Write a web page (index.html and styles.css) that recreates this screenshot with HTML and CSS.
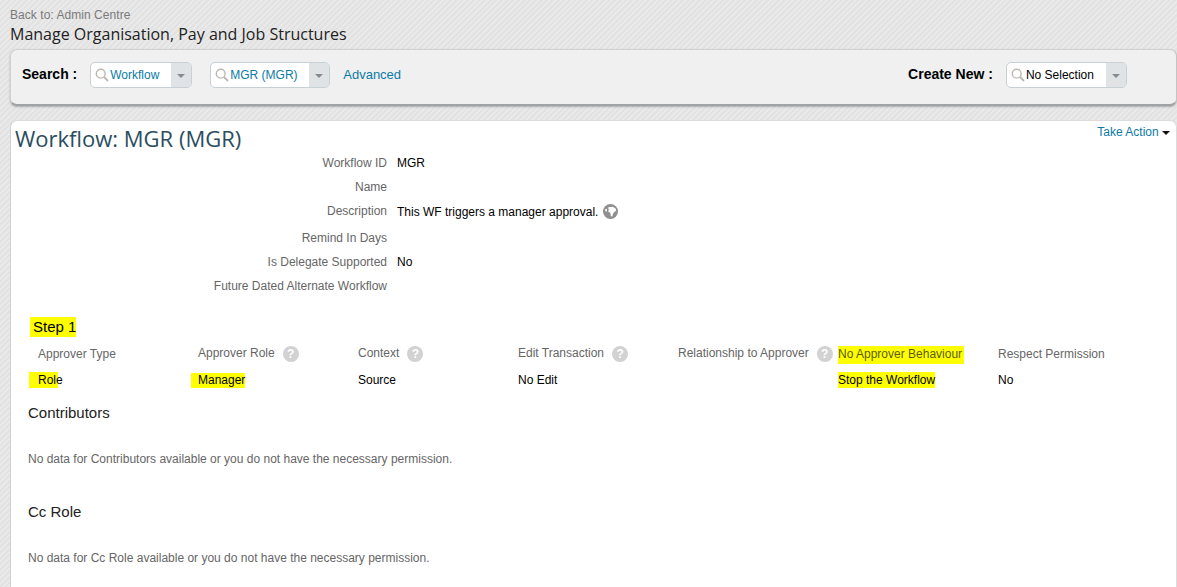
FILE: index.html
```html
<!DOCTYPE html>
<html lang="en">
<head>
<meta charset="utf-8">
<title>Workflow: MGR (MGR)</title>
<link rel="stylesheet" href="styles.css">
</head>
<body>
<svg class="defs" width="0" height="0" aria-hidden="true">
  <symbol id="mag" viewBox="0 0 14 14"><circle cx="5.7" cy="5.7" r="4.4" fill="none" stroke="#bdb8b0" stroke-width="1.4"/><path d="M9 9l4 4" stroke="#bdb8b0" stroke-width="1.8" fill="none"/></symbol>
</svg>
<header class="top">
  <a class="back">Back to: Admin Centre</a>
  <h1 class="page-title">Manage Organisation, Pay and Job Structures</h1>
</header>
<section class="search-panel">
  <span class="panel-label">Search :</span>
  <div class="combo combo-wf"><svg class="mag"><use href="#mag"/></svg><span class="combo-text link">Workflow</span><span class="combo-btn"><i class="arrow"></i></span></div>
  <div class="combo combo-mgr"><svg class="mag"><use href="#mag"/></svg><span class="combo-text link">MGR (MGR)</span><span class="combo-btn"><i class="arrow"></i></span></div>
  <a class="advanced link">Advanced</a>
  <span class="panel-label create-label">Create New :</span>
  <div class="combo combo-new"><svg class="mag"><use href="#mag"/></svg><span class="combo-text">No Selection</span><span class="combo-btn"><i class="arrow"></i></span></div>
</section>
<main class="card">
  <div class="card-head">
    <h2 class="wf-title">Workflow: MGR (MGR)</h2>
    <a class="take-action link">Take Action <i class="arrow-dark"></i></a>
  </div>
  <dl class="fields">
    <dt class="r1">Workflow ID</dt><dd class="r1">MGR</dd>
    <dt class="r2">Name</dt><dd class="r2"></dd>
    <dt class="r3">Description</dt><dd class="r3 desc">This WF triggers a manager approval. <svg class="globe" viewBox="0 0 16 16"><circle cx="8" cy="8" r="8" fill="#8f8f8f"/><path d="M5.6 3.4l5-.6 3 2.2.4 2.2-2.8 2-1.3 3.8-1.4.2-.8-4-2.2-1.2.6-1.6z" fill="#fff"/><path d="M2 5.5l2-.5.4 2.6-1.4.6z" fill="#fff"/></svg></dd>
    <dt class="r4">Remind In Days</dt><dd class="r4"></dd>
    <dt class="r5">Is Delegate Supported</dt><dd class="r5">No</dd>
    <dt class="r6">Future Dated Alternate Workflow</dt><dd class="r6"></dd>
  </dl>
  <h3 class="step"><span class="hl hl-step">Step 1</span></h3>
  <div class="step-grid">
    <div class="th th-a">Approver Type</div>
    <div class="th">Approver Role<span class="help">?</span></div>
    <div class="th">Context<span class="help">?</span></div>
    <div class="th">Edit Transaction<span class="help">?</span></div>
    <div class="th">Relationship to Approver<span class="help">?</span></div>
    <div class="th th-a"><span class="hl hl-behav">No Approver Behaviour</span></div>
    <div class="th th-a">Respect Permission</div>
    <div class="td"><span class="hl hl-role">Role</span></div>
    <div class="td"><span class="hl hl-mgr">Manager</span></div>
    <div class="td">Source</div>
    <div class="td">No Edit</div>
    <div class="td"></div>
    <div class="td"><span class="hl hl-stop">Stop the Workflow</span></div>
    <div class="td">No</div>
  </div>
  <h3 class="sub sub-contrib">Contributors</h3>
  <p class="empty">No data for Contributors available or you do not have the necessary permission.</p>
  <h3 class="sub sub-cc">Cc Role</h3>
  <p class="empty">No data for Cc Role available or you do not have the necessary permission.</p>
</main>
</body>
</html>
```
FILE: styles.css
```css
* { box-sizing: border-box; }
html, body { height: 100%; }
body {
  margin: 0;
  height: 587px;
  overflow: hidden;
  font-family: "Liberation Sans", Arial, sans-serif;
  font-size: 12px;
  color: #000;
  background: repeating-linear-gradient(135deg, #e9e9e9 0 2px, #e2e2e2 2px 4px);
}
.defs { position: absolute; }
.link { color: #0c7aa6; }
.top { padding: 8px 0 0 10px; height: 49px; }
.back { display: block; color: #7a7a7a; line-height: 14px; letter-spacing: .05px; }
.page-title {
  margin: 1px 0 0;
  font: 400 16px/22px "Open Sans", sans-serif;
  color: #222;
}
.search-panel {
  margin-left: 10px;
  height: 57px;
  display: flex;
  align-items: flex-start;
  padding-top: 12px;
  background: #f0f0f0;
  border: 1px solid #d0d0d0;
  border-bottom: 2px solid #9fa3a5;
  border-right: 1px solid #c4c4c4;
  border-radius: 7px;
  box-shadow: 0 1px 2px rgba(0,0,0,.25);
}
.panel-label { font-weight: 700; font-size: 14px; line-height: 22px; margin: 1px 0 0 11px; }
.combo {
  height: 26px;
  display: flex;
  align-items: center;
  background: #fff;
  border: 1px solid #c7d0d4;
  border-radius: 5px;
  overflow: hidden;
}
.combo-wf { width: 102px; margin-left: 13px; }
.combo-mgr { width: 120px; margin-left: 18px; }
.combo-new { width: 121px; margin-left: 13px; }
.create-label { margin-left: 507px; }
.mag { width: 14px; height: 14px; margin-left: 4px; flex: none; }
.combo-text { margin-left: 1px; flex: 1; white-space: nowrap; }
.combo-btn {
  width: 20px; height: 100%;
  background: #dfe3e5;
  display: flex; align-items: center; justify-content: center;
  flex: none;
}
.arrow { width: 0; height: 0; border: 4px solid transparent; border-top: 4px solid #858b8f; border-bottom: 0; margin-top: 2px; }
.advanced { margin: 2px 0 0 13px; font-size: 13px; line-height: 22px; }
.card {
  margin: 14px 0 0 10px;
  height: 481px;
  background: #fff;
  border: 1px solid #dcdcdc;
  border-left-color: #cfcfcf;
  border-radius: 7px 7px 0 0;
}
.card-head { display: flex; justify-content: space-between; align-items: flex-start; }
.wf-title {
  margin: 3px 0 0 4px;
  font: 400 22px/28px "Open Sans", sans-serif;
  color: #2b4d60;
}
.take-action { margin: 4px 6px 0 0; line-height: 14px; }
.arrow-dark { display: inline-block; width: 0; height: 0; border: 4px solid transparent; border-top: 4px solid #111; border-bottom: 0; vertical-align: 1px; }
.fields {
  margin: 3px 0 0;
  display: grid;
  grid-template-columns: 376px 1fr;
  column-gap: 10px;
}
.fields dt { color: #666; text-align: right; line-height: 14px; }
.fields dd { margin: 0; line-height: 14px; }
.r1 { margin-top: 1px !important; height: 24px; }
.r2 { height: 24px; }
.r3 { height: 27px; }
.r4 { height: 24px; }
.r5 { height: 24px; }
.r6 { height: 14px; }
.desc { display: flex; align-items: flex-start; white-space: pre; line-height: 16px !important; }
.globe { width: 15px; height: 15px; margin-left: 1px; }
.step { margin: 25px 0 0 19px; font-weight: 400; font-size: 15px; line-height: 17px; height: 17px; }
.hl { background: #ffff00; }
.hl-step { padding: 1px 0 2px 3px; }
.step-grid {
  margin: 11px 0 0 27px;
  display: grid;
  grid-template-columns: repeat(7, 160px);
  grid-template-rows: 27px 20px;
}
.th { color: #666; line-height: 15px; white-space: nowrap; display: flex; align-items: flex-start; }
.th-a { padding-top: 1px; }
.help {
  width: 16px; height: 16px;
  margin-left: 8px;
  flex: none;
  border-radius: 50%;
  background: #d2d2d2;
  color: #fff;
  font-weight: 700;
  font-size: 12px;
  line-height: 16px;
  text-align: center;
}
.td { line-height: 14px; }
.hl-behav { padding: 1px 2px 2px 0; margin-top: -1px; color: #5c5c00; }
.hl-role { margin-left: -9px; padding: 1px 0 1px 9px; background: linear-gradient(90deg, #ff0 0 29px, transparent 29px); }
.hl-mgr { margin-left: -7px; padding: 0 0 1px 7px; }
.hl-stop { padding: 1px 0; }
.sub { margin: 0 0 0 17px; font-weight: 400; font-size: 15px; line-height: 17px; color: #222; }
.sub-contrib { margin-top: 11px; }
.sub-cc { margin-top: 37px; }
.empty { margin: 31px 0 0 17px; color: #666; line-height: 14px; }
```
